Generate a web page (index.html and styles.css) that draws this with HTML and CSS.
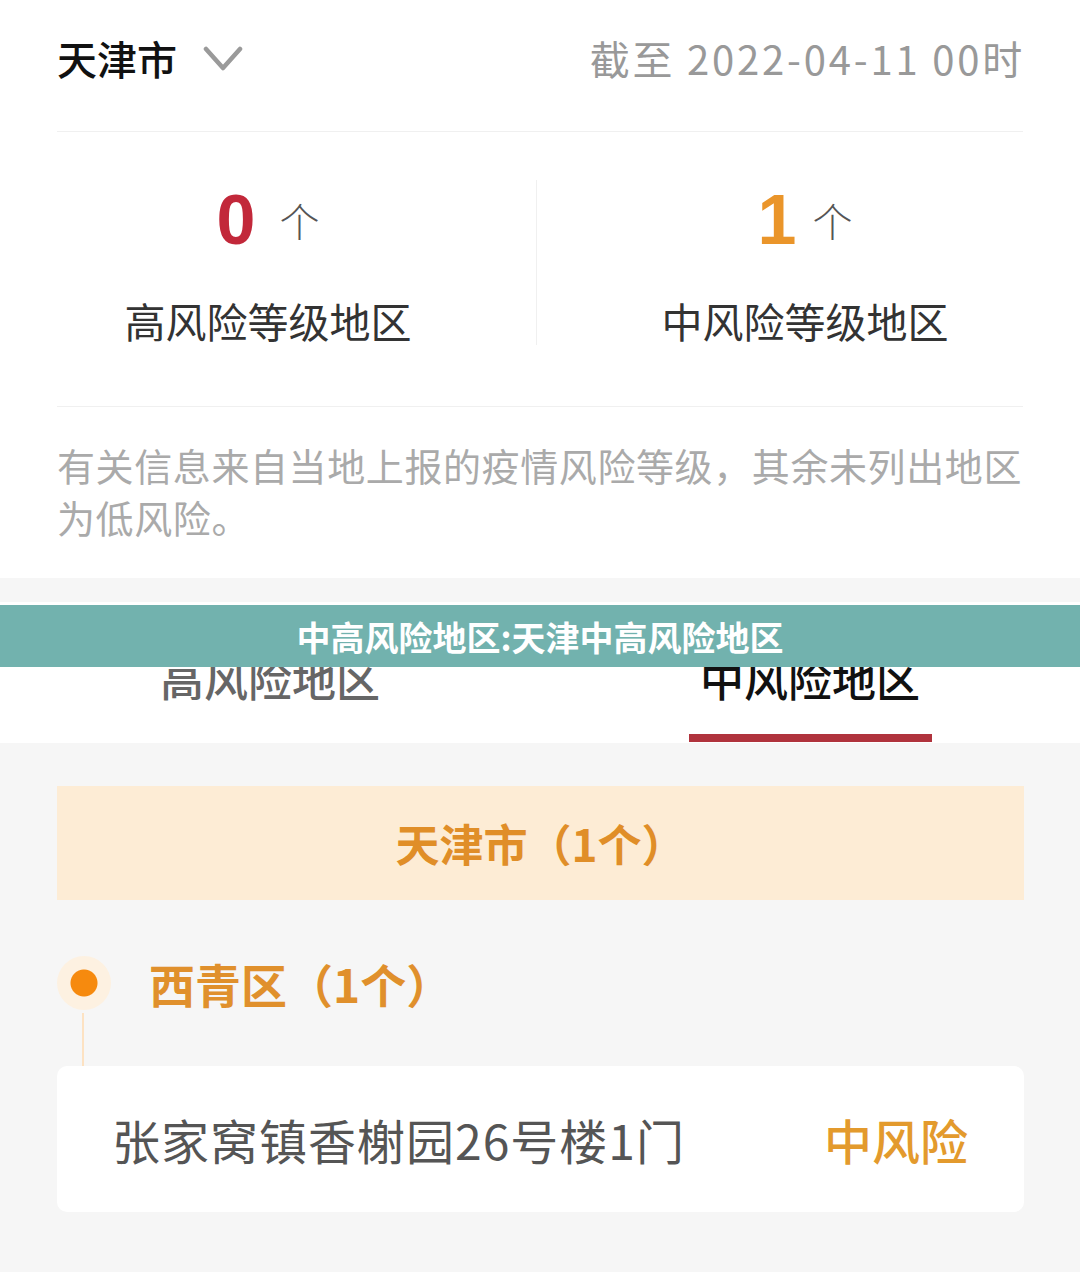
FILE: index.html
```html
<!DOCTYPE html>
<html lang="zh-CN">
<head>
    <meta charset="UTF-8">
    <meta name="viewport" content="width=device-width, initial-scale=1.0">
    <title>中高风险地区</title>
    <link rel="stylesheet" href="styles.css">
</head>
<body>
    <div class="page">
        <section class="summary">
            <header class="top">
                <div class="city">
                    <span>天津市</span>
                    <svg class="chevron" width="40" height="30" viewBox="0 0 40 30">
                        <polyline points="3,5 20,24 37,5" fill="none" stroke="#9a9a9a" stroke-width="4.5" stroke-linecap="round" stroke-linejoin="round"/>
                    </svg>
                </div>
                <div class="date">截至 2022-04-11 00时</div>
            </header>

            <div class="stats">
                <div class="stat">
                    <div class="count"><span class="num high">0</span><span class="unit">个</span></div>
                    <div class="label">高风险等级地区</div>
                </div>
                <div class="stat">
                    <div class="count"><span class="num mid">1</span><span class="unit">个</span></div>
                    <div class="label">中风险等级地区</div>
                </div>
            </div>

            <p class="note">有关信息来自当地上报的疫情风险等级，其余未列出地区为低风险。</p>
        </section>

        <nav class="tabs">
            <div class="tab">高风险地区</div>
            <div class="tab active">中风险地区</div>
        </nav>

        <div class="banner">中高风险地区:天津中高风险地区</div>

        <main class="list">
            <div class="city-box">天津市（1个）</div>

            <div class="district">
                <span class="dot"></span>
                <span class="district-name">西青区（1个）</span>
            </div>
            <div class="timeline"></div>

            <div class="card">
                <span class="address">张家窝镇香榭园26号楼1门</span>
                <span class="level">中风险</span>
            </div>
        </main>
    </div>
</body>
</html>
```

FILE: styles.css
```css
* {
    box-sizing: border-box;
}
body {
    margin: 0;
    background: #f6f6f6;
    font-family: "Noto Sans CJK SC", "Liberation Sans", sans-serif;
    color: #333;
}
.page {
    position: relative;
    min-height: 1272px;
}
.summary {
    background: #fff;
    padding: 0 57px;
    margin-bottom: 24px;
}
.top {
    display: flex;
    align-items: center;
    justify-content: space-between;
    height: 132px;
    padding-bottom: 15px;
    border-bottom: 1px solid #f0f0f0;
}
.city {
    display: flex;
    align-items: center;
    gap: 26px;
    font-size: 40px;
    font-weight: 500;
    color: #111;
}
.chevron {
    margin-top: 2px;
}
.date {
    font-size: 40px;
    color: #999;
    letter-spacing: 2.8px;
    margin-right: -2px;
}
.stats {
    display: flex;
    margin: 0 -50px 0 -57px;
    padding: 48px 0 61px;
}
.stat {
    flex: 1;
    display: flex;
    flex-direction: column;
    align-items: center;
    gap: 35px;
}
.stat + .stat {
    border-left: 1px solid #f0f0f0;
}
.count {
    display: flex;
    align-items: center;
    gap: 24px;
    height: 80px;
}
.num {
    font-family: "Liberation Sans", sans-serif;
    font-size: 70px;
    font-weight: bold;
    line-height: 80px;
}
.num.high {
    color: #c2283a;
}
.num.mid {
    color: #ea952a;
    margin-right: -8px;
}
.unit {
    font-size: 40px;
    font-weight: 300;
    color: #555;
}
.label {
    font-size: 41px;
    line-height: 50px;
    color: #333;
}
.note {
    margin: 0;
    padding: 32px 0 35px;
    border-top: 1px solid #f0f0f0;
    font-size: 38px;
    letter-spacing: 0.6px;
    line-height: 52px;
    color: #aaa;
}
.tabs {
    display: flex;
    background: #fff;
    height: 141px;
    padding-top: 46px;
}
.tab {
    flex: 1;
    display: flex;
    flex-direction: column;
    align-items: center;
    font-size: 44px;
    font-weight: 500;
    line-height: 60px;
    color: #666;
}
.tab.active {
    color: #111;
}
.tab.active::after {
    content: "";
    width: 243px;
    height: 8px;
    margin-top: 26px;
    background: #b0333d;
}
.banner {
    position: absolute;
    top: 605px;
    left: 0;
    right: 0;
    height: 62px;
    display: flex;
    align-items: center;
    justify-content: center;
    background: #72b2ae;
    color: #fff;
    font-size: 34px;
    font-weight: bold;
}
.list {
    padding: 43px 56px 0 57px;
}
.city-box {
    height: 114px;
    display: flex;
    align-items: center;
    justify-content: center;
    background: #fdecd5;
    color: #e08e28;
    font-size: 44px;
    font-weight: bold;
}
.district {
    display: flex;
    align-items: center;
    gap: 38px;
    height: 60px;
    margin-top: 53px;
}
.dot {
    width: 54px;
    height: 54px;
    border-radius: 50%;
    background: radial-gradient(circle, #f68a0e 0 13px, #fdf1e1 14px);
}
.district-name {
    font-size: 46px;
    font-weight: bold;
    color: #e0902c;
}
.timeline {
    width: 0;
    height: 53px;
    margin-left: 25px;
    border-left: 2px solid #fde2c2;
}
.card {
    display: flex;
    align-items: center;
    justify-content: space-between;
    height: 146px;
    padding: 0 56px 0 55px;
    background: #fff;
    border-radius: 10px;
}
.address {
    font-size: 48px;
    letter-spacing: 1px;
    color: #555;
}
.level {
    font-size: 48px;
    font-weight: 500;
    color: #e39a2d;
}
```
